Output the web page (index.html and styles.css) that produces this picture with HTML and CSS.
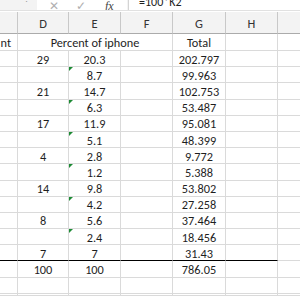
FILE: index.html
```html
<!DOCTYPE html>
<html>
<head>
<meta charset="utf-8">
<link rel="stylesheet" href="styles.css">
</head>
<body>
<div class="formula-bar">
  <div class="name-end"><span class="dots">⋮</span></div>
  <div class="btns"><span class="btn">✕</span><span class="btn">✓</span><span class="fx">fx</span></div>
  <div class="formula">=100*K2</div>
</div>
<div class="sheet">
  <div class="hd"></div><div class="hd">D</div><div class="hd">E</div><div class="hd">F</div><div class="hd">G</div><div class="hd">H</div><div class="hd last"></div>

  <div class="c clip"><span>nt</span></div><div class="c merged">Percent of iphone</div><div class="c">Total</div><div class="c"></div><div class="c last"></div>

  <div class="c"></div><div class="c">29</div><div class="c">20.3</div><div class="c"></div><div class="c">202.797</div><div class="c"></div><div class="c last"></div>
  <div class="c"></div><div class="c"></div><div class="c tri">8.7</div><div class="c"></div><div class="c">99.963</div><div class="c"></div><div class="c last"></div>
  <div class="c"></div><div class="c">21</div><div class="c">14.7</div><div class="c"></div><div class="c">102.753</div><div class="c"></div><div class="c last"></div>
  <div class="c"></div><div class="c"></div><div class="c tri">6.3</div><div class="c"></div><div class="c">53.487</div><div class="c"></div><div class="c last"></div>
  <div class="c"></div><div class="c">17</div><div class="c">11.9</div><div class="c"></div><div class="c">95.081</div><div class="c"></div><div class="c last"></div>
  <div class="c"></div><div class="c"></div><div class="c tri">5.1</div><div class="c"></div><div class="c">48.399</div><div class="c"></div><div class="c last"></div>
  <div class="c"></div><div class="c">4</div><div class="c">2.8</div><div class="c"></div><div class="c">9.772</div><div class="c"></div><div class="c last"></div>
  <div class="c"></div><div class="c"></div><div class="c tri">1.2</div><div class="c"></div><div class="c">5.388</div><div class="c"></div><div class="c last"></div>
  <div class="c"></div><div class="c">14</div><div class="c">9.8</div><div class="c"></div><div class="c">53.802</div><div class="c"></div><div class="c last"></div>
  <div class="c"></div><div class="c"></div><div class="c tri">4.2</div><div class="c"></div><div class="c">27.258</div><div class="c"></div><div class="c last"></div>
  <div class="c"></div><div class="c">8</div><div class="c">5.6</div><div class="c"></div><div class="c">37.464</div><div class="c"></div><div class="c last"></div>
  <div class="c"></div><div class="c"></div><div class="c tri">2.4</div><div class="c"></div><div class="c">18.456</div><div class="c"></div><div class="c last"></div>
  <div class="c sum"></div><div class="c sum">7</div><div class="c sum">7</div><div class="c sum"></div><div class="c sum">31.43</div><div class="c sum"></div><div class="c last"></div>
  <div class="c"></div><div class="c">100</div><div class="c">100</div><div class="c"></div><div class="c">786.05</div><div class="c"></div><div class="c last"></div>
  <div class="c"></div><div class="c"></div><div class="c"></div><div class="c"></div><div class="c"></div><div class="c"></div><div class="c last"></div>
  <div class="c"></div><div class="c"></div><div class="c"></div><div class="c"></div><div class="c"></div><div class="c"></div><div class="c last"></div>
</div>
</body>
</html>
```

FILE: styles.css
```css
html, body {
  margin: 0;
  padding: 0;
  background: #ffffff;
  width: 300px;
  height: 300px;
  overflow: hidden;
  font-family: Carlito, "Liberation Sans", Arial, sans-serif;
  color: #1e1e1e;
}

.formula-bar {
  display: flex;
  height: 10px;
  background: #f3f3f3;
  border-bottom: 1px solid #e1e1e1;
  overflow: hidden;
}

.name-end {
  width: 37px;
}

.dots {
  display: block;
  margin-left: 22px;
  margin-top: -6px;
  font-size: 9px;
  color: #9a9a9a;
  line-height: 10px;
}

.btns {
  width: 90px;
  display: flex;
  align-items: flex-end;
  gap: 17px;
  padding-left: 12px;
  box-sizing: border-box;
  font-size: 12px;
  line-height: 14px;
  color: #b0b0b0;
  background: #fff;
}

.btns .btn {
  margin-bottom: -3px;
}

.fx {
  font-family: "Liberation Serif", serif;
  font-style: italic;
  color: #444;
  margin-bottom: -3px;
  margin-left: 2px;
}

.formula {
  flex: 1;
  background: #fff;
  border-left: 1px solid #d4d4d4;
  font-size: 12px;
  line-height: 10px;
  padding-left: 10px;
  margin-left: 1px;
  margin-top: -3px;
}

.sheet {
  display: grid;
  grid-template-columns: 18px 51px 52px 52px 53px 52px 1fr;
  grid-template-rows: 22px 17px repeat(15, 16.2px);
  margin-top: 1px;
}

.hd {
  background: #f3f3f3;
  border-right: 1px solid #c8c8c8;
  border-bottom: 1px solid #ababab;
  font-family: Carlito, "Liberation Sans", Arial, sans-serif;
  font-size: 12.5px;
  color: #333;
  display: flex;
  align-items: center;
  justify-content: center;
  padding-top: 2px;
  box-sizing: border-box;
}

.hd.last {
  border-right: none;
}

.c {
  position: relative;
  border-right: 1px solid #dadada;
  border-bottom: 1px solid #dadada;
  box-sizing: border-box;
  font-size: 12.3px;
  display: flex;
  align-items: center;
  justify-content: center;
  padding-top: 1px;
  white-space: nowrap;
}

.c.last {
  border-right: none;
}

.c.merged {
  grid-column: span 3;
}

.c.clip {
  overflow: hidden;
  justify-content: flex-end;
  padding-right: 6px;
}

.c.sum {
  border-bottom: 1px solid #000;
}

.tri::before {
  content: "";
  position: absolute;
  left: 0;
  top: 0;
  border-top: 4px solid #1d8a34;
  border-right: 4px solid transparent;
}
```
